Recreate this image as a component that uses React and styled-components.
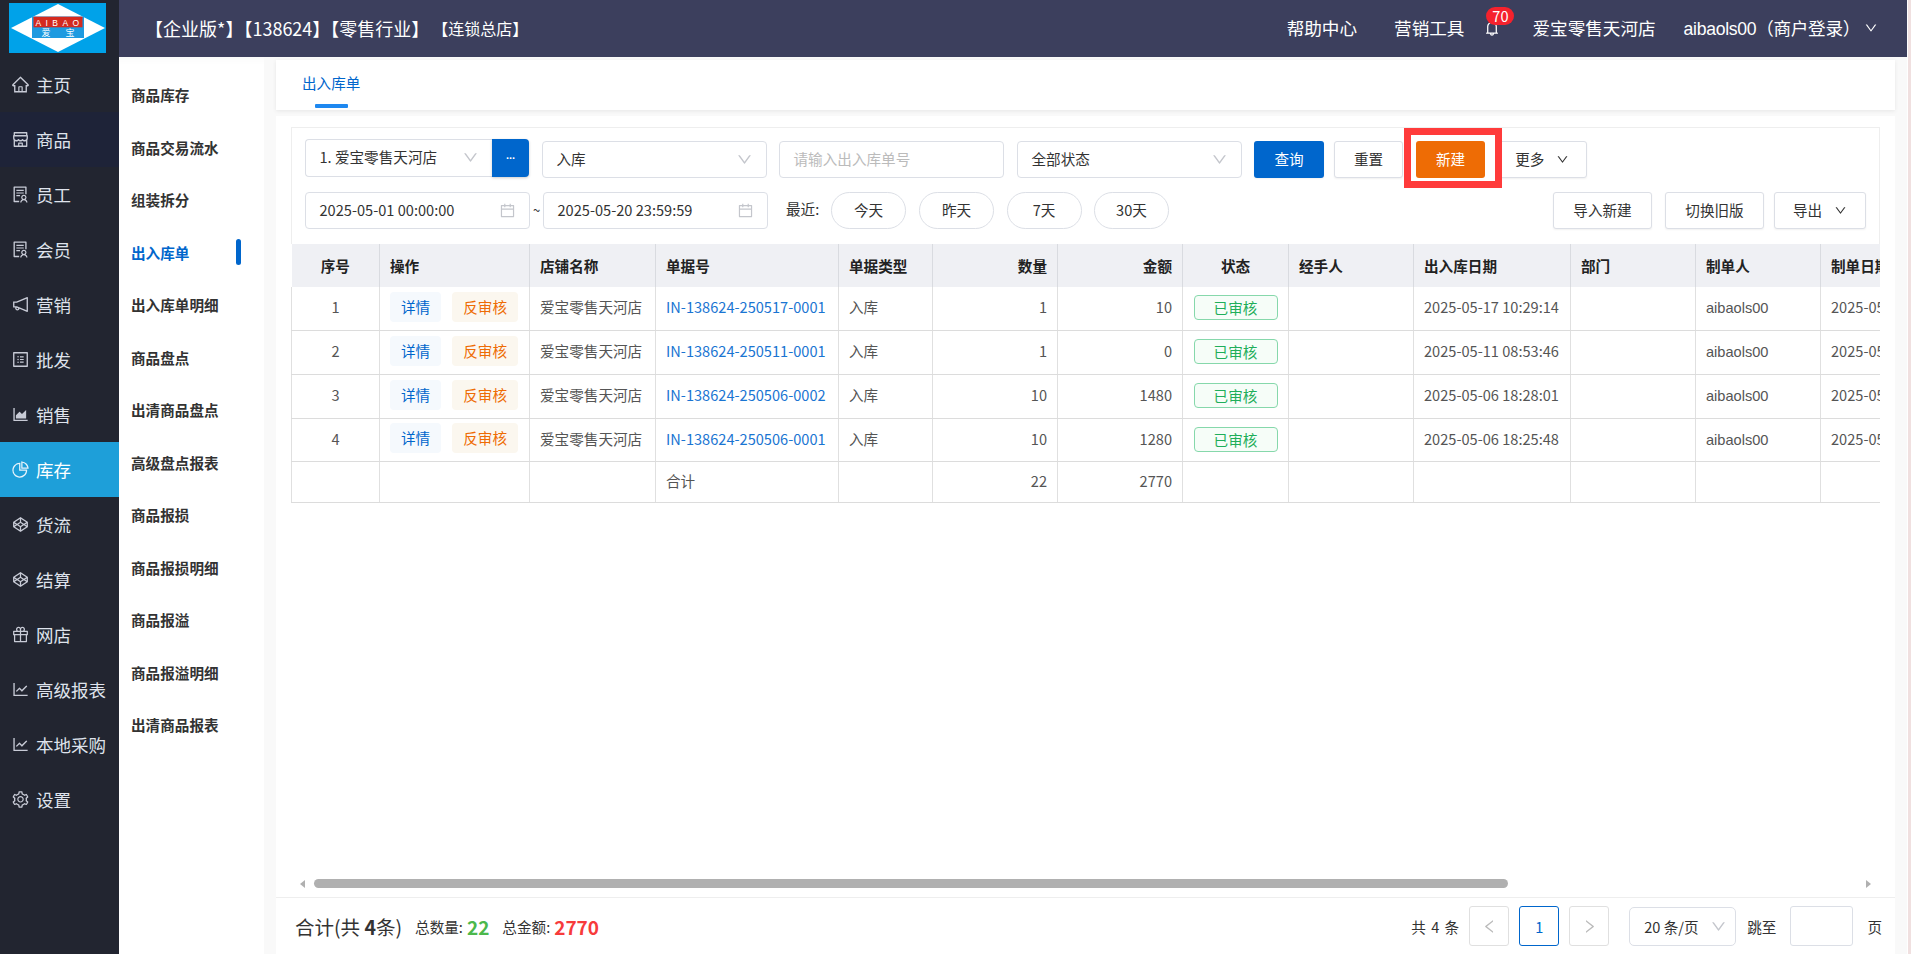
import React from 'react';
import styled, { createGlobalStyle } from 'styled-components';
import {
  AiOutlineHome, AiOutlineShop, AiOutlineSolution, AiOutlineNotification, AiOutlineProfile,
  AiOutlineAreaChart, AiOutlinePieChart, AiOutlineCodepen, AiOutlineGift, AiOutlineLineChart,
  AiOutlineSetting, AiOutlineBell, AiOutlineCalendar, AiOutlineDown, AiOutlineLeft, AiOutlineRight,
} from 'react-icons/ai';

const FONT = '"Noto Sans CJK SC", "Noto Sans", sans-serif';

const Global = createGlobalStyle`
  html, body { margin: 0; padding: 0; background: #fff; }
  body { font-family: ${FONT}; font-size: 14.6px; color: #333; overflow: hidden; }
  * { box-sizing: border-box; }
`;

const Shell = styled.div`
  width: 1911px; height: 954px; display: flex; overflow: hidden; background: #f0e0e0;
`;
const Side = styled.aside`
  width: 119px; flex: none; background: #222530; display: flex; flex-direction: column;
`;
const LogoBox = styled.div`
  height: 57px; padding: 3px 0 0 9px; display: flex; align-items: flex-start;
`;
const Nav = styled.nav`
  display: flex; flex-direction: column;
`;
const NavItem = styled.div`
  height: 55px; display: flex; align-items: center; padding-left: 11px; gap: 6px;
  font-size: 17.5px; color: ${p => (p.$active ? '#fff' : '#dfe3ec')};
  background: ${p => (p.$active ? '#1e9fd9' : p.$hover ? '#1e2338' : 'transparent')};
  svg { width: 19px; height: 19px; color: ${p => (p.$active ? '#e8f4fb' : '#c8cbd6')}; flex: none; }
`;
const Right = styled.div`
  width: 1789px; flex: none; display: flex; flex-direction: column; background: #fff; border-right: 1px solid #fff;
`;
const Header = styled.header`
  height: 57px; flex: none; background: #3c3f5d; color: #fff; display: flex; align-items: center;
  padding: 0 29px 0 26px; justify-content: space-between;
`;
const Title = styled.div`
  font-size: 18px; white-space: nowrap; display: flex; align-items: center; margin-top: -2px;
`;
const TitleSmall = styled.span`
  font-size: 16px; margin-left: 3px;
`;
const HeadRight = styled.div`
  display: flex; align-items: center; font-size: 17.6px; white-space: nowrap; margin-top: -2px;
`;
const HeadLink = styled.span`
  margin-left: ${p => p.$ml || 0}px;
`;
const UserName = styled.span`
  margin-left: 28px; font-family: "Liberation Sans", ${FONT}; letter-spacing: -0.3px;
`;
const Bell = styled.span`
  position: relative; margin-left: 19px; display: flex; color: #fff;
  svg { width: 18px; height: 18px; }
`;
const Badge = styled.span`
  position: absolute; left: 3px; top: -12px; min-width: 28px; height: 18px; border-radius: 9px;
  background: #f5222d; color: #fff; font-size: 14.6px; line-height: 18px; text-align: center;
`;
const Chevron = styled.span`
  display: inline-flex; margin-left: 4px;
  svg { width: 14px; height: 14px; }
`;
const Body = styled.div`
  flex: 1; display: flex; min-height: 0;
`;
const SubNav = styled.div`
  width: 145px; flex: none; background: #fff; padding: 11.5px 0 0 12px;
  display: flex; flex-direction: column;
  box-shadow: inset 0 10px 10px -10px rgba(0,0,0,.05);
`;
const SubItem = styled.div`
  height: 52.5px; flex: none; display: flex; align-items: center; font-weight: 700; font-size: 14.6px;
  color: ${p => (p.$active ? '#0066cc' : '#333')}; position: relative;
`;
const ActiveBar = styled.span`
  position: absolute; left: 105px; top: 13px; width: 5px; height: 26px; background: #0066cc; border-radius: 3px;
`;
const Content = styled.div`
  flex: 1; min-width: 0; background: #f9f9f9; display: flex; flex-direction: column; padding: 3px 12px 0 12px;
`;
const TabCard = styled.div`
  height: 50px; flex: none; background: #fff; padding-left: 26px; box-shadow: 0 1px 4px rgba(0,0,0,.08);
`;
const Tab = styled.div`
  display: inline-flex; flex-direction: column; align-items: center; color: #0066cc; font-size: 14.6px; height: 50px; padding-top: 12px;
  position: relative;
  &::after { content: ''; position: absolute; bottom: 2px; left: 13px; width: 33px; height: 4px; background: #1e88f0; border-radius: 1px; }
`;
const Main = styled.div`
  flex: 1; min-height: 0; margin-top: 6px; background: #fff; display: flex; flex-direction: column;
  padding: 10.5px 15px 0 15px;
`;
const Panel = styled.div`
  flex: 1; min-height: 0; display: flex; flex-direction: column; overflow: hidden;
`;
const Toolbar = styled.div`
  flex: none; border: 1px solid #eee; border-bottom: none;
`;
const Row = styled.div`
  display: flex; align-items: flex-start; padding: ${p => p.$pad}; height: ${p => p.$h}px;
`;
const Box = styled.div`
  width: ${p => p.$w}px; height: 36.6px; margin-left: ${p => p.$ml || 0}px; flex: none; background: #fff;
  border: 1px solid #dcdfe6; border-radius: 4px; display: flex; align-items: center; justify-content: space-between;
  padding: 0 13px 2px 13.5px; font-size: 14.6px; color: ${p => p.$c || '#333'}; white-space: nowrap;
  svg { width: 17px; height: 17px; color: #c4c6cc; flex: none; margin-top: 2px; }
`;
const StoreGroup = styled.div`
  display: flex; width: 224px; height: 37.6px; flex: none; margin-top: -2px; border-radius: 4px;
`;
const StoreBox = styled(Box)`
  flex: 1; width: auto; height: 100%; border-radius: 4px 0 0 4px; border-right: none;
`;
const DotsBtn = styled.div`
  width: 37px; height: 100%; flex: none; background: #0066cc; color: #fff; border-radius: 0 4px 4px 0;
  display: flex; align-items: center; justify-content: center; font-family: "Liberation Sans", sans-serif; font-size: 11px; font-weight: 700;
  line-height: 1; padding-bottom: 4px; box-shadow: 0 1px 3px rgba(0,0,0,.2);
`;
const Btn = styled.div`
  width: ${p => p.$w}px; height: 36.6px; margin-left: ${p => p.$ml || 0}px; flex: none; border-radius: 3px;
  display: flex; align-items: center; justify-content: center; font-size: 14.6px; white-space: nowrap; gap: 12px; padding-bottom: 2px;
  background: ${p => p.$bg || '#fff'}; color: ${p => (p.$bg ? '#fff' : '#333')};
  border: ${p => (p.$bg ? 'none' : '1px solid #dcdfe6')};
  box-shadow: 0 1px 2px rgba(0,0,0,.06);
  svg { width: 13px; height: 13px; margin-top: 2px; }
`;
const Highlight = styled.div`
  position: relative; z-index: 2; flex: none; margin-left: 1px; margin-top: -13px;
  height: 60px; width: 98px; border: 7px solid #ff3b3b; display: flex; align-items: flex-start;
`;
const NewBtn = styled.div`
  margin: 6px 0 0 5px; width: 69px; height: 36.6px; padding-bottom: 2px; background: #ee6c05; color: #fff; border-radius: 3px; flex: none;
  display: flex; align-items: center; justify-content: center; font-size: 14.6px;
`;
const Tilde = styled.span`
  width: 13px; flex: none; text-align: center; font-size: 13px; line-height: 36px;
`;
const Recent = styled.span`
  margin-left: 18px; width: 45px; line-height: 34.6px; flex: none; font-size: 14.6px;
`;
const Pill = styled.div`
  width: 75px; height: 36.6px; margin-left: ${p => p.$ml || 0}px; flex: none; border: 1px solid #dcdfe6; border-radius: 18.3px; background: #fff; padding-bottom: 2px;
  display: flex; align-items: center; justify-content: center; font-size: 14.6px;
`;
const Spacer = styled.div`
  flex: 1;
`;
const TableWrap = styled.div`
  flex: 1; min-height: 0; overflow: hidden;
`;
const Table = styled.table`
  border-collapse: collapse; table-layout: fixed; width: 1680px; font-size: 14.6px;
`;
const Th = styled.th`
  height: 42.7px; background: #eff0f4; font-weight: 700; color: #222; padding: 0 ${p => (p.$center ? '0' : '10px')};
  text-align: ${p => (p.$right ? 'right' : p.$center ? 'center' : 'left')};
  border-left: 1px solid #d9dbe0; white-space: nowrap; overflow: hidden;
  &:first-child { border-left: none; }
`;
const Td = styled.td`
  height: ${p => p.$h || 43.8}px; padding: 0 ${p => (p.$center ? '0' : '10px')} 3px; color: ${p => p.$c || '#555'};
  text-align: ${p => (p.$right ? 'right' : p.$center ? 'center' : 'left')};
  border-left: 1px solid #e0e0e0; border-bottom: 1px solid #dcdcdc; white-space: nowrap; overflow: hidden;
`;
const Actions = styled.div`
  display: flex; gap: 11px;
`;
const ActBtn = styled.span`
  height: 30px; padding: 0 11px; border-radius: 4px; line-height: 29px; font-size: 14.6px;
  background: ${p => (p.$warm ? '#fbf7ef' : '#f5f9fd')}; color: ${p => (p.$warm ? '#ee6c05' : '#0066cc')};
`;
const DocLink = styled.span`
  color: #1a75d2;
`;
const Latin = styled.span`
  font-family: "Liberation Sans", ${FONT};
`;
const Status = styled.span`
  display: block; width: 84px; height: 25px; margin: 2px auto 0; line-height: 23px; text-align: center; color: #1fae5a; font-size: 14.6px;
  border: 1px solid #86d8ab; border-radius: 4px; background: #f6fdf8;
`;
const Scroll = styled.div`
  height: 26px; flex: none; position: relative;
`;
const Thumb = styled.div`
  position: absolute; left: 23px; top: 8px; width: 1194px; height: 9px; background: #b0b0b0; border-radius: 5px;
`;
const Arrow = styled.span`
  position: absolute; top: 8.5px; ${p => (p.$right ? 'right: 9px;' : 'left: 9px;')}
  width: 0; height: 0; border-top: 4px solid transparent; border-bottom: 4px solid transparent;
  ${p => (p.$right ? 'border-left: 5px solid #b0b0b0;' : 'border-right: 5px solid #b0b0b0;')}
`;
const Foot = styled.div`
  height: 57px; flex: none; margin: 0 -15px; border-top: 1px solid #eee; display: flex; align-items: center; padding: 0 13px 0 19px; background: #fff;
`;
const Total = styled.span`
  font-size: 19.5px; color: #333;
`;
const TotalNum = styled.b`
  font-weight: 700;
`;
const SumLabel = styled.span`
  font-size: 14.6px; margin-left: ${p => p.$ml}px; color: #333;
`;
const SumValue = styled.b`
  font-size: 19px; font-weight: 700; margin-left: 4px; color: ${p => p.$c};
`;
const PageText = styled.span`
  font-size: 14.6px; color: #333; margin-left: ${p => p.$ml || 0}px; white-space: nowrap; word-spacing: ${p => p.$ws || 0}px;
`;
const PageBtn = styled.div`
  width: 40px; height: 40px; margin-left: ${p => p.$ml}px; flex: none; border-radius: 3px; display: flex; align-items: center; justify-content: center;
  border: 1px solid ${p => (p.$on ? '#0066cc' : '#e0e0e0')}; color: ${p => (p.$on ? '#0066cc' : '#bbb')}; background: #fff; font-size: 14.6px;
  svg { width: 17px; height: 17px; }
`;
const PageSelect = styled.div`
  width: 107px; height: 39px; margin-left: 20px; flex: none; border: 1px solid #dcdfe6; border-radius: 5px; display: flex; align-items: center; justify-content: space-between;
  padding: 0 8px 0 14px; font-size: 14.6px; color: #333; white-space: nowrap;
  svg { width: 17px; height: 17px; color: #c4c6cc; }
`;
const JumpInput = styled.div`
  width: 63px; height: 40px; margin-left: 14px; flex: none; border: 1px solid #dcdfe6; border-radius: 3px; background: #fff;
`;

const Logo = () => (
  <svg width="97" height="50" viewBox="0 0 97 50" role="img" aria-label="AIBAO">
    <rect width="97" height="50" fill="#00a2e9" />
    <polygon points="2,25 49,1 96,25 49,49" fill="#fff" />
    <rect x="23" y="13.5" width="52" height="21.5" fill="#1e9ae0" />
    <rect x="24.5" y="13.7" width="49" height="10.6" fill="#d42a1f" />
    <text x="26.5" y="22.5" fill="#fff" fontFamily="Liberation Sans" fontSize="8.5" letterSpacing="4.4">AIBAO</text>
    <text x="37" y="33" textAnchor="middle" fill="#fff" fontFamily="Noto Sans CJK SC" fontSize="9">爱</text>
    <text x="61" y="33" textAnchor="middle" fill="#fff" fontFamily="Noto Sans CJK SC" fontSize="9">宝</text>
  </svg>
);

const NAV = [
  [AiOutlineHome, '主页'], [AiOutlineShop, '商品'], [AiOutlineSolution, '员工'], [AiOutlineSolution, '会员'],
  [AiOutlineNotification, '营销'], [AiOutlineProfile, '批发'], [AiOutlineAreaChart, '销售'], [AiOutlinePieChart, '库存'],
  [AiOutlineCodepen, '货流'], [AiOutlineCodepen, '结算'], [AiOutlineGift, '网店'], [AiOutlineLineChart, '高级报表'],
  [AiOutlineLineChart, '本地采购'], [AiOutlineSetting, '设置'],
];
const SUB = ['商品库存', '商品交易流水', '组装拆分', '出入库单', '出入库单明细', '商品盘点', '出清商品盘点', '高级盘点报表', '商品报损', '商品报损明细', '商品报溢', '商品报溢明细', '出清商品报表'];
const COLS = [88, 150, 126, 183, 94, 125, 125, 106, 125, 157, 125, 125, 151];
const ROWS = [
  [1, 'IN-138624-250517-0001', 1, 10, '2025-05-17 10:29:14'],
  [2, 'IN-138624-250511-0001', 1, 0, '2025-05-11 08:53:46'],
  [3, 'IN-138624-250506-0002', 10, 1480, '2025-05-06 18:28:01'],
  [4, 'IN-138624-250506-0001', 10, 1280, '2025-05-06 18:25:48'],
];

export default function App() {
  return (
    <>
      <Global />
      <Shell>
        <Side>
          <LogoBox><Logo /></LogoBox>
          <Nav>
            {NAV.map(([Icon, label]) => (
              <NavItem key={label} $active={label === '库存'} $hover={label === '商品'}>
                <Icon /><span>{label}</span>
              </NavItem>
            ))}
          </Nav>
        </Side>
        <Right>
          <Header>
            <Title>【企业版*】【138624】【零售行业】<TitleSmall>【连锁总店】</TitleSmall></Title>
            <HeadRight>
              <HeadLink>帮助中心</HeadLink>
              <HeadLink $ml={37}>营销工具</HeadLink>
              <Bell><AiOutlineBell /><Badge>70</Badge></Bell>
              <HeadLink $ml={31}>爱宝零售天河店</HeadLink>
              <UserName>aibaols00（商户登录）</UserName>
              <Chevron><AiOutlineDown /></Chevron>
            </HeadRight>
          </Header>
          <Body>
            <SubNav>
              {SUB.map(s => (
                <SubItem key={s} $active={s === '出入库单'}>
                  {s}{s === '出入库单' && <ActiveBar />}
                </SubItem>
              ))}
            </SubNav>
            <Content>
              <TabCard><Tab>出入库单</Tab></TabCard>
              <Main>
                <Panel>
                  <Toolbar>
                    <Row $pad="13.5px 0 0 13px" $h={64.5}>
                      <StoreGroup>
                        <StoreBox>1. 爱宝零售天河店<AiOutlineDown /></StoreBox>
                        <DotsBtn>...</DotsBtn>
                      </StoreGroup>
                      <Box $w={225} $ml={13}>入库<AiOutlineDown /></Box>
                      <Box $w={225} $ml={12} $c="#bbb">请输入出入库单号</Box>
                      <Box $w={225} $ml={13}>全部状态<AiOutlineDown /></Box>
                      <Btn $w={70} $ml={12} $bg="#0066cc">查询</Btn>
                      <Btn $w={69} $ml={10}>重置</Btn>
                      <Highlight><NewBtn>新建</NewBtn></Highlight>
                      <Btn $w={88.5} $ml={-4}>更多<AiOutlineDown /></Btn>
                    </Row>
                    <Row $pad="0 13px 0 13px" $h={52}>
                      <Box $w={225}>2025-05-01 00:00:00<AiOutlineCalendar /></Box>
                      <Tilde>~</Tilde>
                      <Box $w={225}>2025-05-20 23:59:59<AiOutlineCalendar /></Box>
                      <Recent>最近:</Recent>
                      <Pill>今天</Pill>
                      <Pill $ml={13}>昨天</Pill>
                      <Pill $ml={12.5}>7天</Pill>
                      <Pill $ml={12.5}>30天</Pill>
                      <Spacer />
                      <Btn $w={99}>导入新建</Btn>
                      <Btn $w={99} $ml={13}>切换旧版</Btn>
                      <Btn $w={92} $ml={10}>导出<AiOutlineDown /></Btn>
                    </Row>
                  </Toolbar>
                  <TableWrap>
                    <Table>
                      <colgroup>{COLS.map((w, i) => <col key={i} width={w} />)}</colgroup>
                      <thead>
                        <tr>
                          <Th $center>序号</Th><Th>操作</Th><Th>店铺名称</Th><Th>单据号</Th><Th>单据类型</Th>
                          <Th $right>数量</Th><Th $right>金额</Th><Th $center>状态</Th><Th>经手人</Th><Th>出入库日期</Th>
                          <Th>部门</Th><Th>制单人</Th><Th>制单日期</Th>
                        </tr>
                      </thead>
                      <tbody>
                        {ROWS.map(r => (
                          <tr key={r[0]}>
                            <Td $center>{r[0]}</Td>
                            <Td><Actions><ActBtn>详情</ActBtn><ActBtn $warm>反审核</ActBtn></Actions></Td>
                            <Td>爱宝零售天河店</Td>
                            <Td><DocLink>{r[1]}</DocLink></Td>
                            <Td>入库</Td>
                            <Td $right>{r[2]}</Td>
                            <Td $right>{r[3]}</Td>
                            <Td $center><Status>已审核</Status></Td>
                            <Td />
                            <Td>{r[4]}</Td>
                            <Td />
                            <Td><Latin>aibaols00</Latin></Td>
                            <Td>{r[4]}</Td>
                          </tr>
                        ))}
                        <tr>
                          <Td $h={41} /><Td $h={41} /><Td $h={41} />
                          <Td $h={41}>合计</Td><Td $h={41} />
                          <Td $h={41} $right>22</Td><Td $h={41} $right>2770</Td>
                          <Td $h={41} /><Td $h={41} /><Td $h={41} /><Td $h={41} /><Td $h={41} /><Td $h={41} />
                        </tr>
                      </tbody>
                    </Table>
                  </TableWrap>
                  <Scroll><Arrow /><Thumb /><Arrow $right /></Scroll>
                </Panel>
                <Foot>
                  <Total>合计(共 <TotalNum>4</TotalNum>条)</Total>
                  <SumLabel $ml={13}>总数量:</SumLabel><SumValue $c="#4cb84c">22</SumValue>
                  <SumLabel $ml={13}>总金额:</SumLabel><SumValue $c="#f73b3b">2770</SumValue>
                  <Spacer />
                  <PageText $ws={2}>共 4 条</PageText>
                  <PageBtn $ml={10}><AiOutlineLeft /></PageBtn>
                  <PageBtn $ml={10} $on>1</PageBtn>
                  <PageBtn $ml={10}><AiOutlineRight /></PageBtn>
                  <PageSelect>20 条/页<AiOutlineDown /></PageSelect>
                  <PageText $ml={11}>跳至</PageText>
                  <JumpInput />
                  <PageText $ml={14}>页</PageText>
                </Foot>
              </Main>
            </Content>
          </Body>
        </Right>
      </Shell>
    </>
  );
}
